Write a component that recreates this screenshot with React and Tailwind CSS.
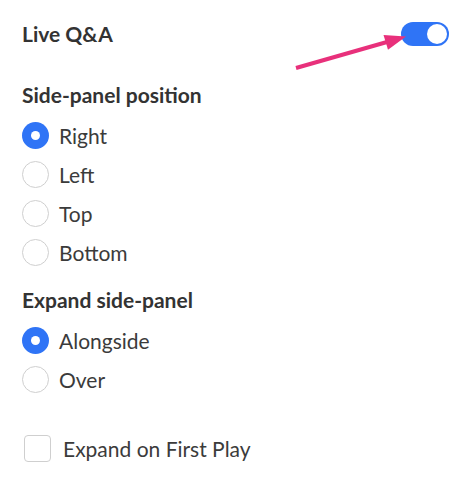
import { useState } from 'react';

function Radio({ checked, label, onClick }) {
  return (
    <button onClick={onClick} className="flex h-[39px] items-center gap-[10px] text-left">
      <span
        className={`grid size-[27px] place-items-center rounded-full ${
          checked ? 'bg-[#2f74f6]' : 'border border-[#cfcfcf] bg-white'
        }`}
      >
        {checked && <span className="size-[9px] rounded-full bg-white" />}
      </span>
      <span className="text-[21px] leading-6 text-[#3b3b3b]">{label}</span>
    </button>
  );
}

export default function App() {
  const [live, setLive] = useState(true);
  const [pos, setPos] = useState('Right');
  const [expand, setExpand] = useState('Alongside');
  const [firstPlay, setFirstPlay] = useState(false);

  return (
    <div className="relative h-[479px] w-[471px] bg-white px-[22px] pt-[22px]" style={{ fontFamily: 'Lato, "Open Sans", sans-serif' }}>
      <div className="flex h-6 items-center justify-between">
        <span className="text-[21px] font-bold leading-6 text-[#333]">Live Q&amp;A</span>
        <button
          onClick={() => setLive(!live)}
          className={`flex h-6 w-12 items-center rounded-full p-[2px] ${live ? 'justify-end bg-[#2f74f6]' : 'justify-start bg-[#ccc]'}`}
        >
          <span className="size-5 rounded-full bg-white" />
        </button>
      </div>

      <h3 className="mt-[37px] text-[21px] font-bold leading-6 text-[#333]">Side-panel position</h3>
      <div className="mt-[9px] flex flex-col">
        {['Right', 'Left', 'Top', 'Bottom'].map((l) => (
          <Radio key={l} label={l} checked={pos === l} onClick={() => setPos(l)} />
        ))}
      </div>

      <h3 className="mt-[16px] text-[21px] font-bold leading-6 text-[#333]">Expand side-panel</h3>
      <div className="mt-[9px] flex flex-col">
        {['Alongside', 'Over'].map((l) => (
          <Radio key={l} label={l} checked={expand === l} onClick={() => setExpand(l)} />
        ))}
      </div>

      <button onClick={() => setFirstPlay(!firstPlay)} className="mt-[36px] flex items-center gap-[12px] pl-[2px]">
        <span
          className={`grid size-[27px] place-items-center rounded-[4px] border ${
            firstPlay ? 'border-[#2f74f6] bg-[#2f74f6]' : 'border-[#cfcfcf] bg-white'
          }`}
        >
          {firstPlay && (
            <svg viewBox="0 0 16 16" className="size-4" fill="none" stroke="white" strokeWidth="2.5">
              <path d="M3 8.5l3 3 7-7" />
            </svg>
          )}
        </span>
        <span className="text-[21px] leading-6 text-[#3b3b3b]">Expand on First Play</span>
      </button>

      {/* callout arrow pointing at the toggle */}
      <svg className="pointer-events-none absolute left-0 top-0" width="471" height="479">
        <line x1="296" y1="68" x2="387" y2="42" stroke="#e8307b" strokeWidth="4" />
        <polygon points="383.5,35 406,36.5 388,49.7" fill="#e8307b" />
      </svg>
    </div>
  );
}
